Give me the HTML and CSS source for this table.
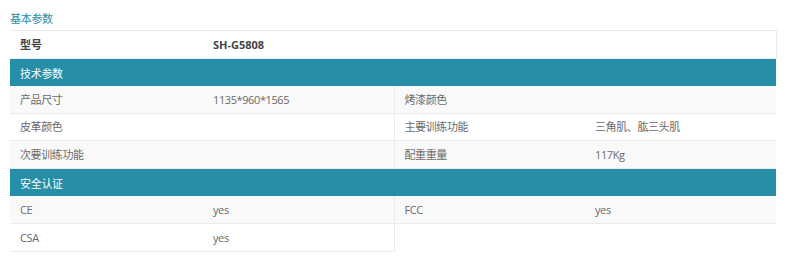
FILE: index.html
```html
<!DOCTYPE html>
<html lang="zh">
<head>
  <meta charset="UTF-8">
  <title>产品参数</title>
  <link rel="stylesheet" href="styles.css">
</head>
<body>
  <div class="params">
    <h3 class="params-title">基本参数</h3>
    <table class="spec">
      <colgroup>
        <col class="c1">
        <col class="c2">
        <col class="c3">
        <col class="c4">
      </colgroup>
      <tr class="main">
        <td>型号</td>
        <td colspan="3">SH-G5808</td>
      </tr>
      <tr class="group">
        <th colspan="4">技术参数</th>
      </tr>
      <tr class="odd">
        <td>产品尺寸</td>
        <td>1135*960*1565</td>
        <td class="sep">烤漆颜色</td>
        <td></td>
      </tr>
      <tr>
        <td>皮革颜色</td>
        <td></td>
        <td class="sep">主要训练功能</td>
        <td>三角肌、肱三头肌</td>
      </tr>
      <tr class="odd">
        <td>次要训练功能</td>
        <td></td>
        <td class="sep">配重重量</td>
        <td>117Kg</td>
      </tr>
      <tr class="group">
        <th colspan="4">安全认证</th>
      </tr>
      <tr class="odd">
        <td>CE</td>
        <td>yes</td>
        <td class="sep">FCC</td>
        <td>yes</td>
      </tr>
      <tr class="last">
        <td>CSA</td>
        <td class="end">yes</td>
      </tr>
    </table>
  </div>
</body>
</html>
```

FILE: styles.css
```css
body {
  margin: 0;
  font-family: "Open Sans", "Noto Sans CJK SC", sans-serif;
  font-size: 11px;
  color: #6a6a6a;
  background: #fff;
}
.params {
  padding: 10px 14px 0 10px;
}
.params-title {
  margin: 0;
  height: 20px;
  line-height: 18px;
  font-size: 11px;
  font-weight: normal;
  letter-spacing: -0.3px;
  color: #2a8ea8;
}
.spec {
  width: 766px;
  border-collapse: collapse;
  table-layout: fixed;
}
.spec .c1 { width: 193px; }
.spec .c2 { width: 191px; }
.spec .c3 { width: 191px; }
.spec .c4 { width: 191px; }
.spec td {
  height: 25.85px;
  padding: 1px 10px 0;
  line-height: 16px;
  letter-spacing: -0.4px;
  border-bottom: 1px solid #ebebeb;
}
.spec .main td {
  border-top: 1px solid #ebebeb;
  color: #444;
  font-weight: bold;
  letter-spacing: 0;
}
.spec .main td:last-child {
  border-right: 1px solid #ebebeb;
}
.spec .group th {
  height: 25.85px;
  padding: 1px 10px 0;
  text-align: left;
  font-weight: normal;
  letter-spacing: -0.3px;
  color: #fff;
  background: #268ea6;
  border-top: 1px solid #6bbccc;
}
.spec .odd td {
  background: #f9f9f9;
}
.spec td.sep {
  border-left: 1px solid #ebebeb;
}
.spec td.end {
  border-right: 1px solid #ebebeb;
}
```
